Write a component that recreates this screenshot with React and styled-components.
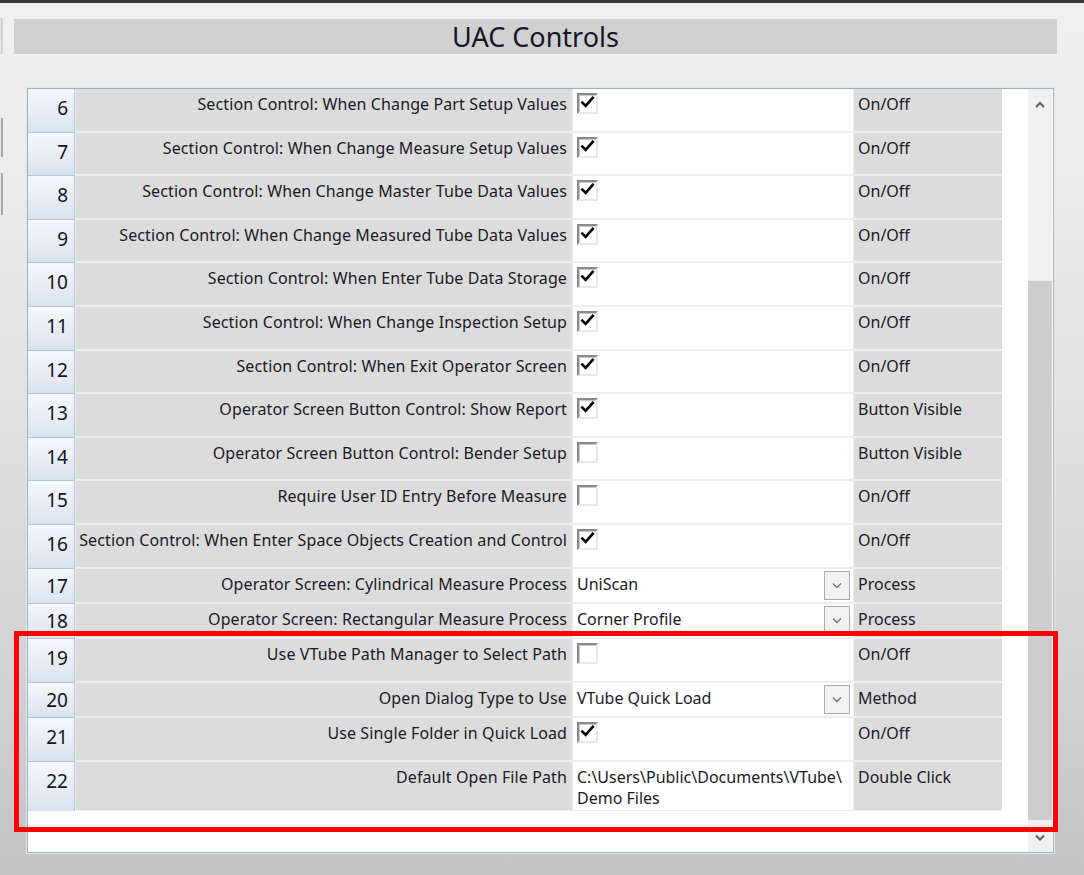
import React from 'react';
import styled, { createGlobalStyle } from 'styled-components';

const Global = createGlobalStyle`
  html, body { margin: 0; padding: 0; }
  body { font-family: "Noto Sans", "Open Sans", sans-serif; }
  * { box-sizing: border-box; }
`;

const Page = styled.div`
  position: relative;
  width: 1084px;
  height: 875px;
  overflow: hidden;
  display: flex;
  flex-direction: column;
  background: linear-gradient(to bottom, #f0f0f0 0%, #ececec 20%, #d6d6d6 70%, #c4c4c4 100%);
`;

const TopLine = styled.div`
  height: 3px;
  background: #3a3a3a;
  flex: none;
`;

const Body = styled.div`
  flex: 1;
  display: flex;
`;

const LeftRail = styled.div`
  width: 3px;
  display: flex;
  flex-direction: column;
`;

const Stub = styled.div`
  height: ${p => p.$h}px;
  margin-top: ${p => p.$mt}px;
  border-right: 2px solid ${p => p.$c || '#a8a8a8'};
  background: #e4e4e4;
`;

const Main = styled.div`
  flex: 1;
  padding-left: 11px;
  display: flex;
  flex-direction: column;
`;

const TitleBar = styled.div`
  margin-top: 16px;
  width: 1043px;
  height: 35px;
  background: #d0d0d0;
  display: flex;
  align-items: center;
  justify-content: center;
  font-size: 27px;
  color: #161628;
  line-height: 1;
  padding-bottom: 1px;
`;

const Panel = styled.div`
  margin-top: 34px;
  margin-left: 13px;
  width: 1027px;
  height: 765px;
  border: 1px solid #9cb2c8;
  box-shadow: 0 0 0 1px #e4e8ec;
  background: #fff;
  display: flex;
`;

const TableArea = styled.div`
  width: 974px;
  display: flex;
  flex-direction: column;
`;

const Table = styled.div`
  display: grid;
  grid-template-columns: 47px 496px 280px 148px;
  column-gap: 1px;
  row-gap: 2px;
  background: #eceef3;
  padding-bottom: 1px;
`;

const HeadCell = styled.div`
  background: linear-gradient(to bottom, #f5f8fc 0%, #e6ecf4 60%, #d9e2ee 100%);
  border-right: 1px solid #b2c4d8;
  border-bottom: 1px solid #b2c4d8;
  margin-bottom: -2px;
  height: ${p => p.$h + 2}px;
  text-align: right;
  padding-right: 6px;
  padding-top: ${p => (p.$h < 40 ? 7 : 9)}px;
  font-size: 19px;
  line-height: 21px;
  color: #141420;
`;

const LabelCell = styled.div`
  height: ${p => p.$h}px;
  background: #dcdcdc;
  text-align: right;
  padding: 5px 5px 0 0;
  font-size: 16px;
  line-height: 21px;
  letter-spacing: 0.11px;
  color: #1a1a28;
  white-space: nowrap;
`;

const ValueCell = styled.div`
  position: relative;
  height: ${p => p.$h}px;
  background: #fff;
  padding: ${p => (p.$check ? '4px 0 0 4px' : '5px 0 0 4px')};
  font-size: 16px;
  line-height: 21px;
  color: #1a1a28;
  white-space: nowrap;
`;

const TypeCell = styled.div`
  height: ${p => p.$h}px;
  background: #dcdcdc;
  padding: 5px 0 0 4px;
  font-size: 16px;
  line-height: 21px;
  color: #1a1a28;
  white-space: nowrap;
`;

const CheckBox = styled.div`
  width: 21px;
  height: 21px;
  background: #fff;
  border-top: 2px solid #8a8a8a;
  border-left: 2px solid #8a8a8a;
  border-right: 2px solid #e8e8e8;
  border-bottom: 2px solid #e8e8e8;
  box-shadow: inset 1px 1px 0 #c8c8c8;
  display: flex;
  align-items: flex-start;
  justify-content: flex-start;
`;

const DropButton = styled.div`
  position: absolute;
  right: 3px;
  top: 2px;
  width: 26px;
  height: 29px;
  border: 1px solid #acacac;
  background: #f2f2f2;
  display: flex;
  align-items: center;
  justify-content: center;
`;

const Filler = styled.div`
  flex: 1;
  background: #fff;
`;

const Scrollbar = styled.div`
  width: 24px;
  margin-left: 26px;
  display: flex;
  flex-direction: column;
  background: #f0f0f0;
`;

const ArrowBox = styled.div`
  height: 30px;
  display: flex;
  align-items: center;
  justify-content: center;
  flex: none;
`;

const Track = styled.div`
  flex: 1;
  display: flex;
  flex-direction: column;
  padding-bottom: 2px;
`;

const Thumb = styled.div`
  height: 539px;
  margin-top: auto;
  background: #cdcdcd;
`;

const Annotation = styled.div`
  position: absolute;
  left: 14px;
  top: 631px;
  width: 1044px;
  height: 201px;
  border: 5px solid #ff0000;
  pointer-events: none;
`;

const rows = [
  { n: 6, label: 'Section Control: When Change Part Setup Values', kind: 'check', on: true, type: 'On/Off' },
  { n: 7, label: 'Section Control: When Change Measure Setup Values', kind: 'check', on: true, type: 'On/Off' },
  { n: 8, label: 'Section Control: When Change Master Tube Data Values', kind: 'check', on: true, type: 'On/Off' },
  { n: 9, label: 'Section Control: When Change Measured Tube Data Values', kind: 'check', on: true, type: 'On/Off' },
  { n: 10, label: 'Section Control: When Enter Tube Data Storage', kind: 'check', on: true, type: 'On/Off' },
  { n: 11, label: 'Section Control: When Change Inspection Setup', kind: 'check', on: true, type: 'On/Off' },
  { n: 12, label: 'Section Control: When Exit Operator Screen', kind: 'check', on: true, type: 'On/Off' },
  { n: 13, label: 'Operator Screen Button Control: Show Report', kind: 'check', on: true, type: 'Button Visible' },
  { n: 14, label: 'Operator Screen Button Control: Bender Setup', kind: 'check', on: false, type: 'Button Visible' },
  { n: 15, label: 'Require User ID Entry Before Measure', kind: 'check', on: false, type: 'On/Off' },
  { n: 16, label: 'Section Control: When Enter Space Objects Creation and Control', kind: 'check', on: true, type: 'On/Off' },
  { n: 17, label: 'Operator Screen: Cylindrical Measure Process', kind: 'combo', value: 'UniScan', type: 'Process' },
  { n: 18, label: 'Operator Screen: Rectangular Measure Process', kind: 'combo', value: 'Corner Profile', type: 'Process' },
  { n: 19, label: 'Use VTube Path Manager to Select Path', kind: 'check', on: false, type: 'On/Off' },
  { n: 20, label: 'Open Dialog Type to Use', kind: 'combo', value: 'VTube Quick Load', type: 'Method' },
  { n: 21, label: 'Use Single Folder in Quick Load', kind: 'check', on: true, type: 'On/Off' },
  { n: 22, label: 'Default Open File Path', kind: 'text', lines: ['C:\\Users\\Public\\Documents\\VTube\\', 'Demo Files'], type: 'Double Click' },
];

const heightOf = r => {
  if (r.kind === 'combo') return 33;
  if (r.kind === 'text') return 48;
  if (r.n >= 19) return 42;
  return 41.6;
};

const Check = () => (
  <svg width="17" height="17" viewBox="0 0 17 17" style={{ marginLeft: 1 }}>
    <path d="M2.5 7.5 L6 11 L13.5 2.5" fill="none" stroke="#000" strokeWidth="2.8" strokeLinecap="square" strokeLinejoin="miter" />
  </svg>
);

const Chevron = ({ up, color = '#606060', sw = 2 }) => (
  <svg width="10" height="7" viewBox="0 0 10 7">
    <path d={up ? 'M1 6 L5 2 L9 6' : 'M1 1.5 L5 5.5 L9 1.5'} fill="none" stroke={color} strokeWidth={sw} />
  </svg>
);

function ValueContent({ r, h }) {
  if (r.kind === 'check') {
    return (
      <ValueCell $h={h} $check>
        <CheckBox>{r.on && <Check />}</CheckBox>
      </ValueCell>
    );
  }
  if (r.kind === 'combo') {
    return (
      <ValueCell $h={h}>
        {r.value}
        <DropButton>
          <Chevron color="#707070" sw={1.3} />
        </DropButton>
      </ValueCell>
    );
  }
  return (
    <ValueCell $h={h}>
      {r.lines.map(l => (
        <div key={l}>{l}</div>
      ))}
    </ValueCell>
  );
}

export default function App() {
  return (
    <Page>
      <Global />
      <TopLine />
      <Body>
        <LeftRail>
          <Stub $mt={15} $h={36} $c="#d0d0d0" />
          <Stub $mt={64} $h={39} />
          <Stub $mt={16} $h={42} />
        </LeftRail>
        <Main>
          <TitleBar>UAC Controls</TitleBar>
          <Panel>
            <TableArea>
              <Table>
                {rows.map(r => {
                  const h = heightOf(r);
                  return (
                    <React.Fragment key={r.n}>
                      <HeadCell $h={h}>{r.n}</HeadCell>
                      <LabelCell $h={h}>{r.label}</LabelCell>
                      <ValueContent r={r} h={h} />
                      <TypeCell $h={h}>{r.type}</TypeCell>
                    </React.Fragment>
                  );
                })}
              </Table>
              <Filler />
            </TableArea>
            <Scrollbar>
              <ArrowBox>
                <Chevron up />
              </ArrowBox>
              <Track>
                <Thumb />
              </Track>
              <ArrowBox>
                <Chevron />
              </ArrowBox>
            </Scrollbar>
          </Panel>
        </Main>
      </Body>
      <Annotation />
    </Page>
  );
}
